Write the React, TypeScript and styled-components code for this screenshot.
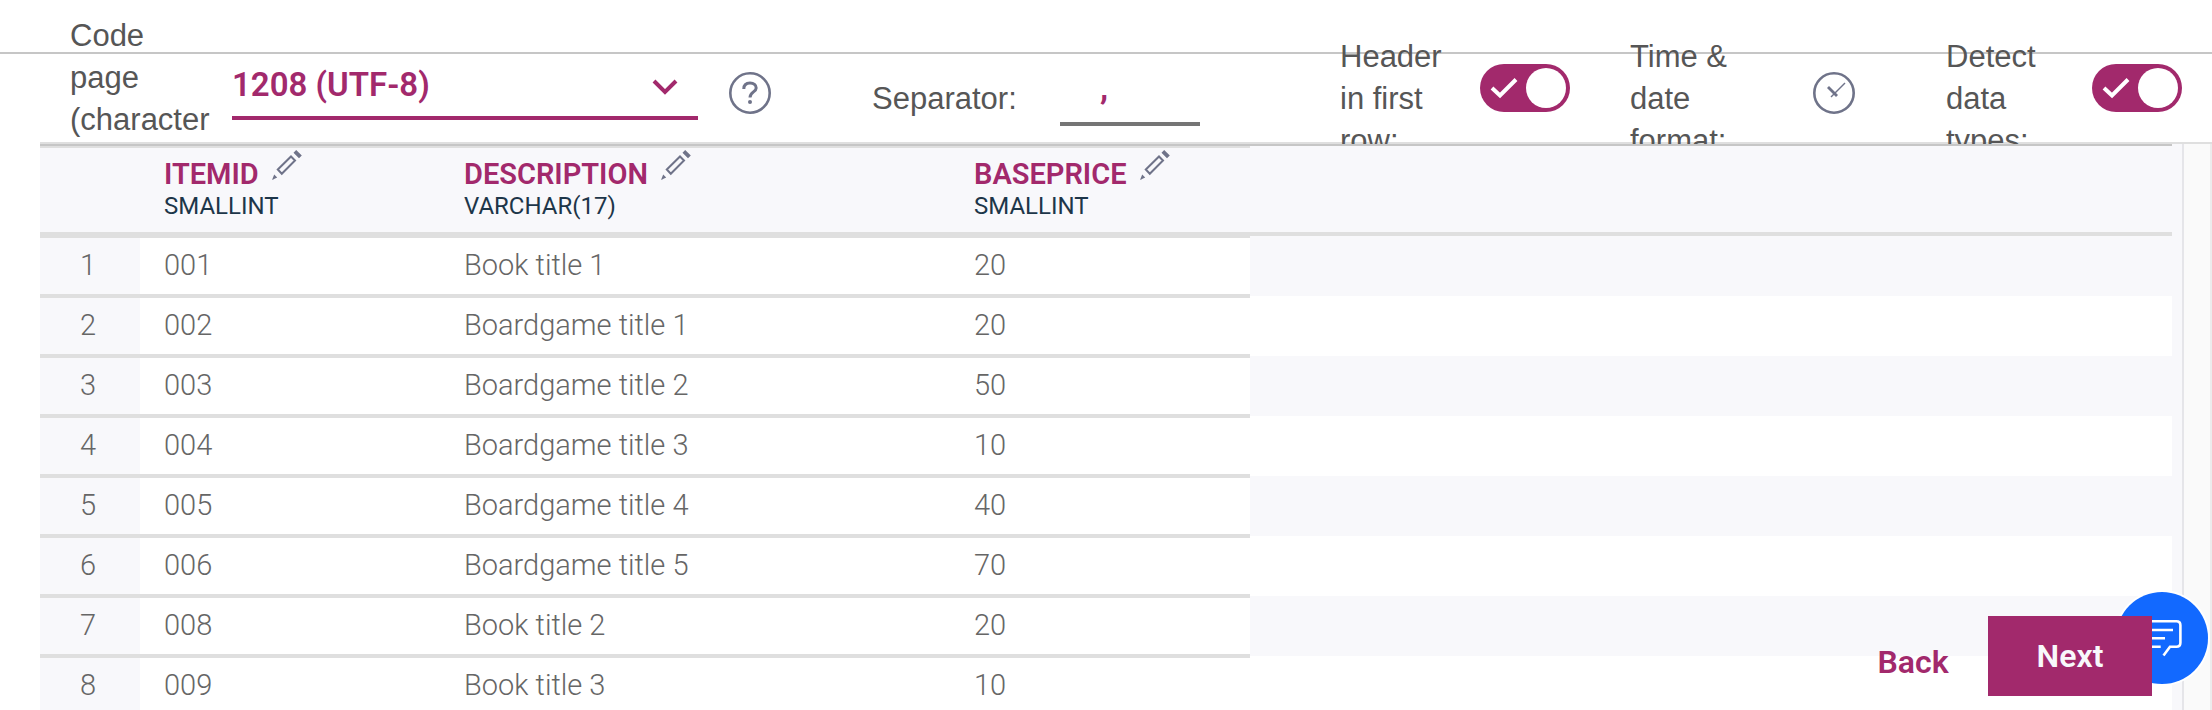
import React from "react";
import styled, { createGlobalStyle } from "styled-components";

const brand = "#a2296c";
const tint = "#f8f8fb";
const rule = "#dfdfdf";
const sans = `Roboto, "Noto Sans", sans-serif`;

const GlobalStyle = createGlobalStyle`
  * { box-sizing: border-box; }
  body { margin: 0; background: #fff; font-family: ${sans}; }
  button, select, input { font-family: inherit; }
`;

const Page = styled.div`
  position: relative;
  display: flex;
  flex-direction: column;
  height: 100vh;
  overflow: hidden;
  background: #fff;
`;

const Toolbar = styled.form`
  position: relative;
  flex: none;
  display: flex;
  align-items: center;
  height: 144px;
  padding: 54px 30px 0 70px;
  overflow: hidden;
  z-index: 0;

  &::before,
  &::after {
    content: "";
    position: absolute;
    right: 0;
    height: 2px;
    z-index: -1;
  }
  &::before { left: 0; top: 52px; background: #c6c6c6; }
  &::after { left: 40px; bottom: 0; background: ${rule}; }
`;

const FieldLabel = styled.label<{ $width: number; $lines?: number }>`
  flex: none;
  width: ${(p) => p.$width}px;
  min-height: ${(p) => (p.$lines ?? 1) * 42}px;
  font-family: "Liberation Sans", Arial, sans-serif;
  font-size: 31px;
  line-height: 42px;
  color: #565656;
`;

const SelectBox = styled.div`
  position: relative;
  flex: 1 1 0;
  align-self: flex-start;
  min-width: 240px;
  margin-left: 16px;
  color: ${brand};

  svg {
    position: absolute;
    right: 20px;
    top: 24px;
    pointer-events: none;
  }
`;

const Select = styled.select`
  display: block;
  appearance: none;
  width: 100%;
  height: 66px;
  padding: 0 0 2px;
  border: 0;
  border-bottom: 4px solid ${brand};
  border-radius: 0;
  background: transparent;
  color: ${brand};
  font-size: 33px;
  font-weight: 600;
`;

const IconButton = styled.button<{ $before: number; $after: number }>`
  flex: none;
  align-self: flex-start;
  width: 42px;
  height: 42px;
  margin: 18px ${(p) => p.$after}px 0 ${(p) => p.$before}px;
  padding: 0;
  border: 0;
  background: transparent;
  color: #6f7389;

  svg { display: block; }
`;

const SeparatorInput = styled.input`
  flex: none;
  align-self: flex-start;
  width: 140px;
  height: 72px;
  margin: 0 140px 0 38px;
  padding: 0 40px 2px;
  border: 0;
  border-bottom: 4px solid #757575;
  border-radius: 0;
  background: transparent;
  color: ${brand};
  font-size: 33px;
  font-weight: 700;
`;

const Switch = styled.span<{ $after?: number }>`
  position: relative;
  flex: none;
  align-self: flex-start;
  width: 90px;
  height: 48px;
  margin-top: 10px;
  margin-right: ${(p) => p.$after ?? 0}px;

  svg {
    position: absolute;
    left: 10px;
    top: 13px;
    pointer-events: none;
  }
`;

const SwitchInput = styled.input`
  appearance: none;
  display: flex;
  justify-content: flex-end;
  width: 90px;
  height: 48px;
  margin: 0;
  padding: 4px;
  border-radius: 24px;
  background: ${brand};

  &::before {
    content: "";
    width: 40px;
    height: 40px;
    border-radius: 50%;
    background: #fff;
  }
`;

const Workspace = styled.main`
  flex: 1;
  display: flex;
  min-height: 0;
  padding-left: 40px;
`;

const Preview = styled.section`
  flex: 1;
  display: flex;
  align-items: flex-start;
  min-width: 0;
  border-top: 2px solid #c6c6c6;
`;

const Table = styled.table`
  flex: none;
  width: 1210px;
  table-layout: fixed;
  border-collapse: separate;
  border-spacing: 0;
`;

const Col = styled.col<{ $width: number }>`
  width: ${(p) => p.$width}px;
`;

const HeadCell = styled.th`
  height: 92px;
  padding: 10px 0 0 24px;
  border-top: 2px solid ${rule};
  border-bottom: 6px solid ${rule};
  background: ${tint};
  text-align: left;
  vertical-align: top;
  white-space: nowrap;
  font-weight: 400;
`;

const ColumnName = styled.div`
  display: flex;
  height: 32px;
  line-height: 32px;
  font-size: 29px;
  font-weight: 600;
  color: ${brand};
`;

const EditButton = styled.button`
  width: 32px;
  height: 32px;
  margin: -8px 0 0 12px;
  padding: 0;
  border: 0;
  background: transparent;
  color: #6f7389;

  svg { display: block; }
`;

const ColumnType = styled.div`
  line-height: 32px;
  font-size: 24px;
  color: #1d3649;
`;

const cell = `
  height: 60px;
  border-bottom: 4px solid ${rule};
  font-size: 29px;
  font-weight: 300;
  line-height: 36px;
  color: #666;
`;

const RowNumber = styled.th`
  ${cell}
  padding: 0 4px 2px 0;
  background: ${tint};
  text-align: center;
`;

const Cell = styled.td`
  ${cell}
  padding: 0 0 2px 24px;
  background: #fff;
`;

const Filler = styled.div`
  flex: 1;
  min-width: 0;
`;

const FillerHead = styled.div`
  height: 90px;
  border-bottom: 4px solid ${rule};
  background: ${tint};
`;

const FillerRow = styled.div`
  height: 60px;
  &:nth-child(even) { background: ${tint}; }
`;

const Gutter = styled.aside`
  flex: none;
  width: 40px;
  border-left: 10px solid ${tint};
  background: #fafafa;
  box-shadow: inset 2px 0 #e5e5e9, inset -2px 0 #ececec;
`;

const Actions = styled.div`
  position: absolute;
  right: 60px;
  bottom: 14px;
  z-index: 2;
  display: flex;
`;

const ActionButton = styled.button<{ $primary?: boolean }>`
  align-self: flex-end;
  width: ${(p) => (p.$primary ? 164 : 150)}px;
  height: ${(p) => (p.$primary ? 80 : 68)}px;
  padding: 0;
  border: 0;
  background: ${(p) => (p.$primary ? brand : "transparent")};
  color: ${(p) => (p.$primary ? tint : brand)};
  font-size: 32px;
  font-weight: 600;
`;

const ChatButton = styled.button`
  position: absolute;
  right: 4px;
  bottom: 26px;
  z-index: 1;
  width: 92px;
  height: 92px;
  padding: 0;
  border: 0;
  border-radius: 50%;
  background: #1269ff;
  box-shadow: 0 0 0 2px #fff;
  color: #fff;

  svg { display: block; margin: 0 auto; }
`;

const Pencil = () => (
  <svg width="32" height="32" viewBox="0 0 32 32" fill="none" stroke="currentColor" strokeWidth="2">
    <path d="M6.800 19.500 L20 6.500 L24 10.500 L10.800 23.800 Z" />
    <path
      d="M22.500 2.700 L25.200 0 L30.800 5.500 L28 8.200 Z M1 30 L3.200 24.500 L6.200 27.500 Z"
      fill="currentColor"
      stroke="none"
    />
  </svg>
);

const Check = () => (
  <svg width="28" height="22" viewBox="0 0 28 22" fill="none" stroke="#fff" strokeWidth="4">
    <path d="M2 11 L10 18.500 L26 2.500" />
  </svg>
);

const Toggle = ({ id, after }: { id: string; after?: number }) => (
  <Switch $after={after}>
    <SwitchInput id={id} type="checkbox" role="switch" defaultChecked />
    <Check />
  </Switch>
);

const columns = [
  { name: "ITEMID", type: "SMALLINT" },
  { name: "DESCRIPTION", type: "VARCHAR(17)" },
  { name: "BASEPRICE", type: "SMALLINT" },
];

const rows = [
  ["001", "Book title 1", "20"],
  ["002", "Boardgame title 1", "20"],
  ["003", "Boardgame title 2", "50"],
  ["004", "Boardgame title 3", "10"],
  ["005", "Boardgame title 4", "40"],
  ["006", "Boardgame title 5", "70"],
  ["008", "Book title 2", "20"],
  ["009", "Book title 3", "10"],
];

export default function App() {
  return (
    <Page>
      <GlobalStyle />
      <Toolbar>
        <FieldLabel htmlFor="codepage" $width={146} $lines={4}>Code page (character</FieldLabel>
        <SelectBox>
          <Select id="codepage">
            <option>1208 (UTF-8)</option>
          </Select>
          <svg width="26" height="18" viewBox="0 0 26 18" fill="none" stroke="currentColor" strokeWidth="4">
            <path d="M2 3 L13 14 L24 3" />
          </svg>
        </SelectBox>
        <IconButton type="button" aria-label="Help" $before={31} $after={101}>
          <svg width="42" height="42" viewBox="0 0 42 42" fill="none" stroke="currentColor">
            <circle cx="21" cy="21" r="19.7" strokeWidth="2.6" />
            <path d="M14.8 17 C14.8 13 17.4 11 21 11 C24.800 11 27.200 13 27.200 16 C27.200 20 21 20 21 25.500" strokeWidth="3" />
            <circle cx="21" cy="30" r="2" fill="currentColor" stroke="none" />
          </svg>
        </IconButton>
        <FieldLabel htmlFor="separator" $width={150}>Separator:</FieldLabel>
        <SeparatorInput id="separator" defaultValue="," />
        <FieldLabel htmlFor="header-row" $width={140} $lines={3}>Header<br />in first<br />row:</FieldLabel>
        <Toggle id="header-row" after={60} />
        <FieldLabel htmlFor="time-format" $width={122} $lines={3}>Time &amp;<br />date format:</FieldLabel>
        <IconButton id="time-format" type="button" $before={61} $after={91}>
          <svg width="42" height="42" viewBox="0 0 42 42" fill="none" stroke="currentColor">
            <circle cx="21" cy="21" r="19.7" strokeWidth="2.6" />
            <path d="M15 15 L24 24" strokeWidth="2.800" />
            <path d="M18 25 L32 11" strokeWidth="1.500" />
          </svg>
        </IconButton>
        <FieldLabel htmlFor="detect" $width={146} $lines={3}>Detect<br />data<br />types:</FieldLabel>
        <Toggle id="detect" />
      </Toolbar>
      <Workspace>
        <Preview>
          <Table>
            <colgroup>
              <Col $width={100} />
              <Col $width={300} />
              <Col $width={510} />
              <Col $width={300} />
            </colgroup>
            <thead>
              <tr>
                <HeadCell as="td" />
                {columns.map((c) => (
                  <HeadCell key={c.name} scope="col">
                    <ColumnName>
                      {c.name}
                      <EditButton type="button" aria-label={`Edit ${c.name}`}>
                        <Pencil />
                      </EditButton>
                    </ColumnName>
                    <ColumnType>{c.type}</ColumnType>
                  </HeadCell>
                ))}
              </tr>
            </thead>
            <tbody>
              {rows.map((r, i) => (
                <tr key={r[0]}>
                  <RowNumber scope="row">{i + 1}</RowNumber>
                  {r.map((value, j) => (
                    <Cell key={j}>{value}</Cell>
                  ))}
                </tr>
              ))}
            </tbody>
          </Table>
          <Filler>
            <FillerHead />
            {rows.map((r) => (
              <FillerRow key={r[0]} />
            ))}
          </Filler>
        </Preview>
        <Gutter />
      </Workspace>
      <ChatButton type="button" aria-label="Chat">
        <svg width="44" height="44" viewBox="0 0 44 44" fill="none" stroke="currentColor" strokeWidth="2.600">
          <path d="M20.700 30.700 H8 Q4 30.700 4 26.700 V9.300 Q4 5.300 8 5.300 H36.400 Q40.400 5.300 40.400 9.300 V26.700 Q40.400 30.700 36.400 30.700 H30 L23.500 39.500" />
          <path d="M11 14 H33 M11 22.300 H25" />
        </svg>
      </ChatButton>
      <Actions>
        <ActionButton type="button">Back</ActionButton>
        <ActionButton type="button" $primary>Next</ActionButton>
      </Actions>
    </Page>
  );
}
